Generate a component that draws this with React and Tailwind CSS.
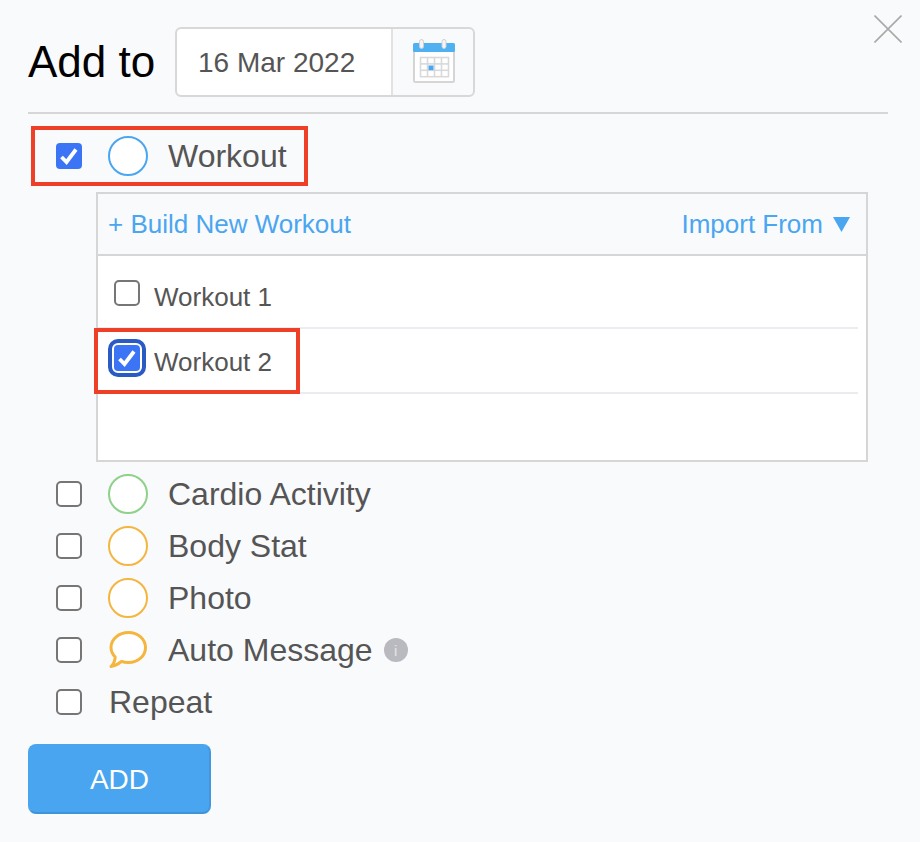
const F = { fontFamily: '"Liberation Sans", Arial, sans-serif' };

function Check({ on, className = "" }) {
  if (on) {
    return (
      <span className={"flex h-[26px] w-[26px] shrink-0 items-center justify-center rounded-[4px] bg-[#3b75f5] " + className}>
        <svg width="26" height="26" viewBox="0 0 26 26" fill="none">
          <path d="M5.5 14 L10.5 19 L20 6.5" stroke="#fff" strokeWidth="3.8" />
        </svg>
      </span>
    );
  }
  return <span className={"block h-[26px] w-[26px] shrink-0 rounded-[5px] border-2 border-[#767676] bg-white " + className} />;
}

function Ring({ color }) {
  return <span className={"block h-10 w-10 shrink-0 rounded-full border-2 bg-white " + color} />;
}

function Bubble() {
  return (
    <svg width="40" height="40" viewBox="0 0 40 40" fill="none" className="shrink-0">
      <path
        d="M20.5 2.5 C30 2.5 37.5 9 37.5 17.5 C37.5 26 30 32.5 20.5 32.5 C18 32.5 15.5 32.2 13.5 31.4 C10.5 34 7 36 3 36.5 C5.5 34 7 31 7.2 27 C4.5 24.2 3 21 3 17.5 C3 9 11 2.5 20.5 2.5 Z"
        fill="#fff"
        stroke="#f4b63f"
        strokeWidth="3"
        strokeLinejoin="round"
      />
    </svg>
  );
}

function Calendar() {
  const lines = [];
  for (let c = 0; c <= 4; c++) {
    lines.push(<path key={"c" + c} d={`M${7.5 + c * 7} 18 V38`} stroke="#d9d9d9" strokeWidth="1.6" />);
  }
  for (let r = 0; r <= 3; r++) {
    lines.push(<path key={"r" + r} d={`M7 ${18.5 + r * 6.4} H36`} stroke="#d9d9d9" strokeWidth="1.6" />);
  }
  return (
    <svg width="42" height="44" viewBox="0 0 42 44" fill="none" className="-mt-0.5 ml-px">
      <rect x="1" y="5" width="40" height="38" rx="1.5" fill="#fff" stroke="#d5d5d5" strokeWidth="2" />
      <rect x="0" y="4" width="42" height="9" rx="1.5" fill="#4fb0f2" />
      <rect x="6.5" y="0.5" width="4" height="9" rx="2" fill="#f5f5f5" stroke="#cfcfcf" />
      <rect x="29" y="0.5" width="4" height="9" rx="2" fill="#f5f5f5" stroke="#cfcfcf" />
      {lines}
      <rect x="15.5" y="26.5" width="5" height="4.6" fill="#4aa6f0" />
    </svg>
  );
}

function Row({ on, icon, children }) {
  return (
    <div className="flex h-[52px] items-center pl-7">
      <Check on={on} />
      <span className="flex items-center pl-[26px] text-[32px] leading-none text-[#555]">
        {icon && <span className="mr-5 flex">{icon}</span>}
        {children}
      </span>
    </div>
  );
}

export default function App() {
  return (
    <div style={F} className="relative h-[842px] w-[920px] overflow-hidden bg-[#f9fafc] px-7 pt-[27px]">
      <svg className="absolute left-[874px] top-[15px]" width="28" height="28" viewBox="0 0 28 28" fill="none">
        <path d="M0.5 0.5 L27.5 27.5 M27.5 0.5 L0.5 27.5" stroke="#a9a9a9" strokeWidth="1.6" />
      </svg>

      <div className="flex items-center">
        <h1 className="w-[147px] text-[44px] font-normal leading-none text-black">Add to</h1>
        <div className="flex h-[70px] w-[300px] rounded-[6px] border-2 border-[#d8d8d8]">
          <div className="flex w-[216px] items-center rounded-l-[5px] border-r-2 border-[#e2e2e2] bg-white pl-[21px] pt-0.5 text-[28px] text-[#555]">
            16 Mar 2022
          </div>
          <div className="flex flex-1 items-center justify-center">
            <Calendar />
          </div>
        </div>
      </div>

      <div className="mt-[15px] h-0.5 w-[860px] bg-[#d6d6d6]" />

      <div className="relative mt-4">
        <div className="pointer-events-none absolute left-[3px] top-[-4px] h-[60px] w-[277px] border-4 border-[#ee4027]" />
        <Row on icon={<Ring color="border-[#4aa6f0]" />}>Workout</Row>
      </div>

      <div className="relative ml-[68px] mt-2.5 h-[270px] w-[772px] border-2 border-[#d6d6d6]">
        <div className="flex h-[62px] items-center justify-between border-b-2 border-[#d6d6d6] pl-2.5 pr-[16px] text-[26px] text-[#4aa6f0]">
          <span>+ Build New Workout</span>
          <span className="flex items-center gap-[10px]">
            Import From
            <svg width="17" height="15" viewBox="0 0 17 15">
              <path d="M0 0 H17 L8.5 15 Z" fill="#4aa6f0" />
            </svg>
          </span>
        </div>
        <div className="h-[204px] bg-white pr-2">
          <div className="flex h-[73px] items-center border-b-2 border-[#ececf0] pl-4 text-[26px] text-[#555]">
            <Check className="mt-6 self-start" />
            <span className="ml-[14px] mt-3">Workout 1</span>
          </div>
          <div className="flex h-[65px] items-center border-b-2 border-[#ececf0] pl-4 text-[26px] text-[#555]">
            <Check on className="mt-4 self-start outline-4 outline-offset-2 outline-[#2a5bc4]" />
            <span className="ml-[14px] mt-1">Workout 2</span>
          </div>
        </div>
        <div className="pointer-events-none absolute left-[-4px] top-[134px] h-[66px] w-[206px] border-4 border-[#ee4027]" />
      </div>

      <div className="mt-1.5">
        <Row icon={<Ring color="border-[#8fd08a]" />}>Cardio Activity</Row>
        <Row icon={<Ring color="border-[#f4b63f]" />}>Body Stat</Row>
        <Row icon={<Ring color="border-[#f4b63f]" />}>Photo</Row>
        <Row icon={<Bubble />}>
          Auto Message
          <span className="ml-[11px] flex h-6 w-6 items-center justify-center rounded-full bg-[#b9bac0] text-[15px] text-[#e4e4e8]">i</span>
        </Row>
        <Row>
          <span className="ml-px">Repeat</span>
        </Row>
      </div>

      <button className="mt-4 h-[70px] w-[183px] rounded-lg border-2 border-[#4aa5f0] border-r-[#4297e0] border-b-[#3f93d8] bg-[#4aa5f0] pt-0.5 text-[28px] text-white">
        ADD
      </button>
    </div>
  );
}
